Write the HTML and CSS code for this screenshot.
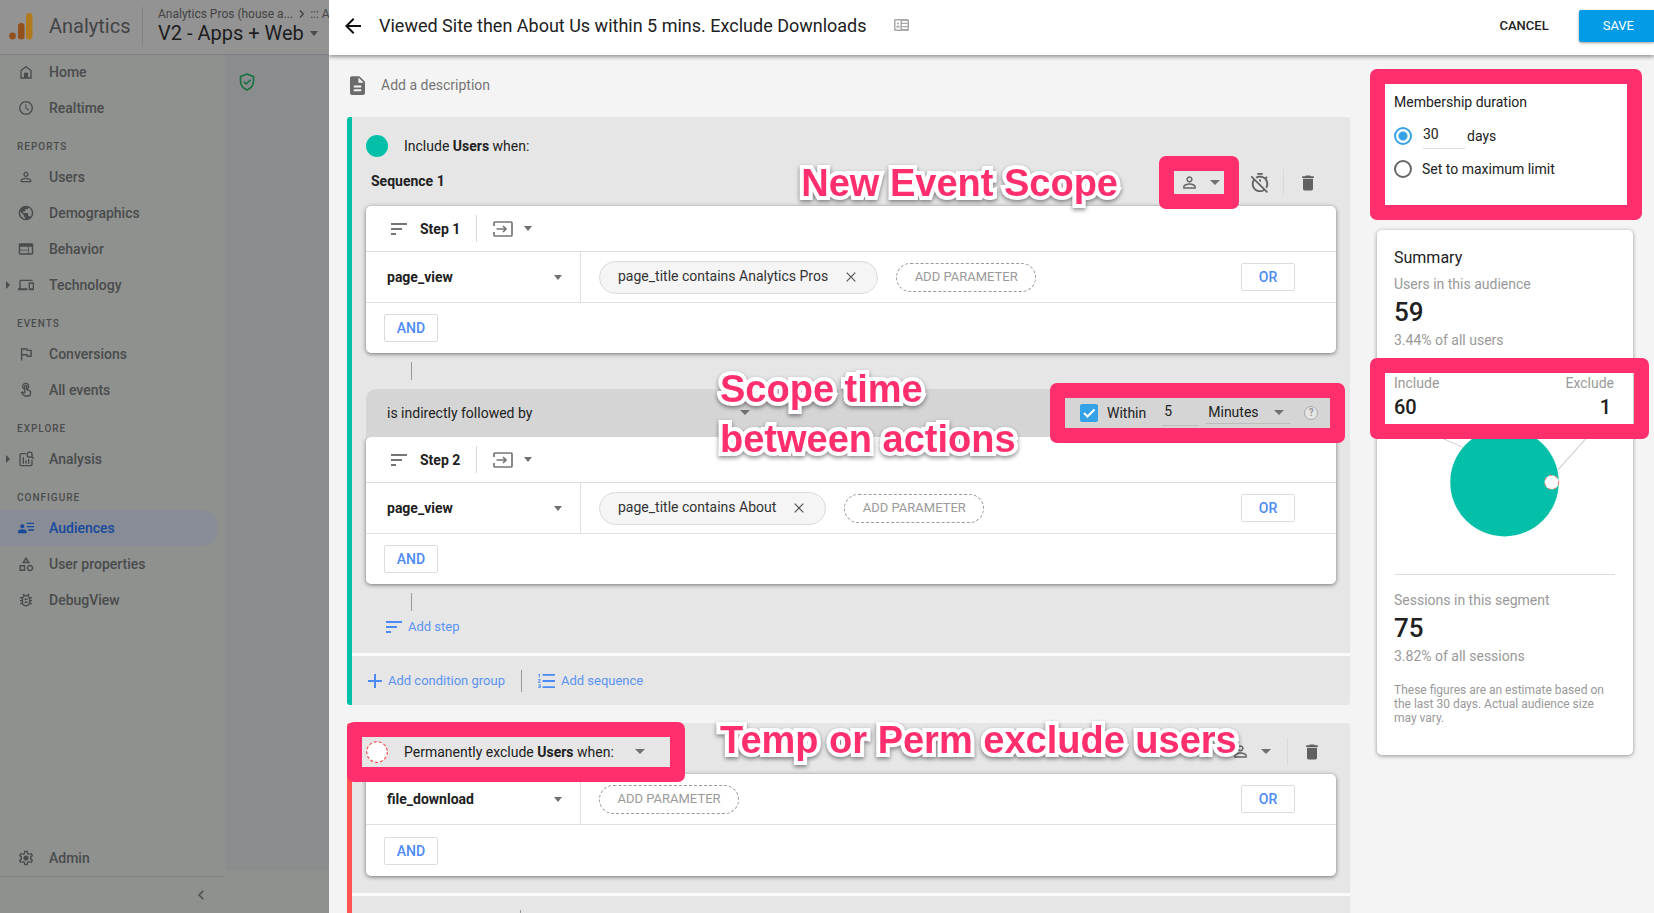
FILE: index.html
```html
<!DOCTYPE html>
<html lang="en">
<head>
<meta charset="utf-8">
<title>Analytics - Audience builder</title>
<meta name="viewport" content="width=device-width, initial-scale=1">
<link rel="stylesheet" href="styles.css">
</head>
<body>
<svg class="sprite" aria-hidden="true">
  <symbol id="i-person" viewBox="0 0 24 24"><path d="M12 5.9c1.16 0 2.1.94 2.1 2.1s-.94 2.1-2.1 2.1S9.900 9.160 9.900 8s.94-2.100 2.100-2.100m0 9c2.970 0 6.100 1.460 6.100 2.100v1.100H5.900V17c0-.64 3.130-2.100 6.100-2.100M12 4C9.790 4 8 5.790 8 8s1.790 4 4 4 4-1.790 4-4-1.790-4-4-4zm0 9c-2.670 0-8 1.340-8 4v3h16v-3c0-2.660-5.330-4-8-4z"/></symbol>
  <symbol id="i-trash" viewBox="0 0 24 24"><path d="M6 19c0 1.100.9 2 2 2h8c1.100 0 2-.9 2-2V7H6v12zM19 4h-3.500l-1-1h-5l-1 1H5v2h14V4z"/></symbol>
  <symbol id="i-steps" viewBox="0 0 16 12"><path d="M0 0h16v2H0zM0 5h11v2H0zM0 10h5v2H0z"/></symbol>
  <symbol id="i-enter" viewBox="0 0 20 16"><path d="M1 5V2q0-1 1-1h16q1 0 1 1v12q0 1-1 1H2q-1 0-1-1v-3M3.500 8H13M10 5l3 3-3 3" fill="none" stroke="currentColor" stroke-width="1.700"/></symbol>
  <symbol id="i-close" viewBox="0 0 10 10"><path d="M.7.7l8.600 8.600M9.300.7L.7 9.300" fill="none" stroke="currentColor" stroke-width="1.200"/></symbol>
</svg>

<div class="app">
  <header class="topbar">
    <svg class="logo" viewBox="0 0 24 28" aria-hidden="true"><rect x="17" y="1" width="6.500" height="26.500" rx="3.200" fill="#b07a1f"/><rect x="9" y="11" width="6.500" height="16.500" rx="3.200" fill="#92501c"/><circle cx="3.500" cy="24" r="3.400" fill="#92501c"/></svg>
    <span class="brand">Analytics</span>
    <div class="property">
      <div class="crumbs"><span>Analytics Pros (house a...</span><svg viewBox="0 0 5 8" aria-hidden="true"><path d="M1 .5L4.200 4 1 7.500" fill="none" stroke="currentColor" stroke-width="1.500"/></svg><span>::: Ana</span></div>
      <div class="prop-name">V2 - Apps + Web <i class="caret"></i></div>
    </div>
  </header>
  <nav class="sidebar">
    <a class="nav-item" href="#"><svg viewBox="0 0 24 24"><path d="M4.500 9.800L12 4l7.500 5.800V21h-15z" fill="none" stroke="currentColor" stroke-width="2"/><path d="M9 13h6v8H9z"/></svg>Home</a>
    <a class="nav-item" href="#"><svg viewBox="0 0 24 24"><path d="M12 1.500A10.500 10.500 0 1 0 12 22.500 10.500 10.500 0 1 0 12 1.500zm0 19a8.500 8.500 0 1 1 0-17 8.500 8.500 0 0 1 0 17zM12.500 6.500H11v6.200l4.900 3.400.9-1.300-4.300-2.900z"/></svg>Realtime</a>
    <h2 class="nav-head">REPORTS</h2>
    <a class="nav-item" href="#"><svg><use href="#i-person"/></svg>Users</a>
    <a class="nav-item" href="#"><svg viewBox="1 1 22 22"><path d="M12 2C6.480 2 2 6.480 2 12s4.480 10 10 10 10-4.480 10-10S17.520 2 12 2zm-1 17.930c-3.950-.49-7-3.850-7-7.930 0-.62.08-1.210.21-1.790L9 15v1c0 1.100.9 2 2 2v1.930zm6.900-2.540c-.26-.81-1-1.390-1.900-1.390h-1v-3c0-.55-.45-1-1-1H8v-2h2c.55 0 1-.45 1-1V7h2c1.100 0 2-.9 2-2v-.41c2.930 1.190 5 4.060 5 7.410 0 2.080-.8 3.970-2.100 5.390z"/></svg>Demographics</a>
    <a class="nav-item" href="#"><svg viewBox="1 1 22 22"><path d="M20 4H4c-1.100 0-1.990.9-1.990 2L2 18c0 1.100.9 2 2 2h16c1.100 0 2-.9 2-2V6c0-1.100-.9-2-2-2zm-5 14H4v-4h11v4zm0-5H4V9h11v4zm5 5h-4V9h4v9z"/></svg>Behavior</a>
    <a class="nav-item has-children" href="#"><svg viewBox="0 0 24 24"><path d="M4 6h18V4H4c-1.100 0-2 .9-2 2v11H0v3h14v-3H4V6zm19 2h-6c-.55 0-1 .45-1 1v10c0 .55.45 1 1 1h6c.55 0 1-.45 1-1V9c0-.55-.45-1-1-1zm-1 9h-4v-7h4v7z"/></svg>Technology</a>
    <h2 class="nav-head">EVENTS</h2>
    <a class="nav-item" href="#"><svg viewBox="1 1 22 22"><path d="M12.360 6l.4 2H18v6h-3.360l-.4-2H7V6h5.360M14 4H5v17h2v-7h5.600l.4 2h7V6h-5.600L14 4z"/></svg>Conversions</a>
    <a class="nav-item" href="#"><svg viewBox="0 0 24 24"><path d="M18.190 12.440l-3.240-1.620c1.290-1 2.120-2.560 2.120-4.320 0-3.030-2.470-5.500-5.500-5.500s-5.500 2.470-5.500 5.500c0 2.130 1.220 3.980 3 4.890v3.260c-2.150-.46-2.020-.44-2.260-.44-.53 0-1.030.21-1.410.59L4 16.220l5.090 5.090c.43.44 1.030.69 1.650.69h6.300c.98 0 1.810-.7 1.970-1.670l.8-4.710c.22-1.300-.43-2.580-1.620-3.180zm-.35 2.850l-.8 4.710h-6.300c-.09 0-.17-.04-.24-.1l-3.680-3.680 4.250.89V6.500c0-.28.22-.5.500-.5s.5.22.5.500v6h1.760l3.460 1.730c.4.2.62.63.55 1.060zM8.070 6.500c0-1.930 1.570-3.500 3.500-3.500s3.500 1.570 3.500 3.500c0 .95-.38 1.810-1 2.440V6.500c0-1.380-1.120-2.500-2.500-2.500s-2.500 1.120-2.500 2.500v2.440c-.62-.63-1-1.490-1-2.440z"/></svg>All events</a>
    <h2 class="nav-head">EXPLORE</h2>
    <a class="nav-item has-children" href="#"><svg viewBox="0 0 24 24"><path d="M12 4H5q-2 0-2 2v14q0 2 2 2h14q2 0 2-2v-7" fill="none" stroke="currentColor" stroke-width="2"/><circle cx="17.500" cy="5.500" r="3.800" fill="none" stroke="currentColor" stroke-width="2"/><path d="M20 8l3.500 3.500" stroke="currentColor" stroke-width="2"/><path d="M7 9h2v10H7zM11 14h2v5h-2zM15 12h2v7h-2z"/></svg>Analysis</a>
    <h2 class="nav-head">CONFIGURE</h2>
    <a class="nav-item active" href="#"><svg viewBox="0 0 24 24"><circle cx="6.500" cy="9.500" r="3"/><path d="M0 20v-2q0-4 6.500-4t6.500 4v2zM13 4h11v2H13zM13 9h11v2H13zM15 14h9v2h-9z"/></svg>Audiences</a>
    <a class="nav-item" href="#"><svg viewBox="1 1 22 22"><path d="M12 2l-5.500 9h11L12 2zm0 3.840L13.930 9h-3.870L12 5.840zM17.500 13c-2.490 0-4.500 2.010-4.500 4.500s2.010 4.500 4.500 4.500 4.500-2.010 4.500-4.500-2.010-4.500-4.500-4.500zm0 7c-1.380 0-2.500-1.120-2.500-2.500s1.120-2.500 2.500-2.500 2.500 1.120 2.500 2.500-1.120 2.500-2.500 2.500zM3 21.500h8v-8H3v8zm2-6h4v4H5v-4z"/></svg>User properties</a>
    <a class="nav-item" href="#"><svg viewBox="1 1 22 22"><path d="M20 8h-2.810c-.45-.78-1.070-1.450-1.820-1.960L17 4.410 15.590 3l-2.170 2.170C12.960 5.060 12.490 5 12 5s-.96.06-1.410.17L8.410 3 7 4.410l1.620 1.630C7.880 6.550 7.260 7.220 6.810 8H4v2h2.090c-.05.33-.09.66-.09 1v1H4v2h2v1c0 .34.04.67.09 1H4v2h2.810c1.040 1.790 2.970 3 5.190 3s4.150-1.210 5.190-3H20v-2h-2.090c.05-.33.09-.66.09-1v-1h2v-2h-2v-1c0-.34-.04-.67-.09-1H20V8zm-4 7c0 2.300-1.700 4-4 4s-4-1.700-4-4v-4c0-2.300 1.700-4 4-4s4 1.700 4 4zm-6-1h4v2h-4zm0-4h4v2h-4z" fill-rule="evenodd"/></svg>DebugView</a>
    <div class="nav-bottom">
      <a class="nav-item" href="#"><svg viewBox="1 1 22 22"><path fill-rule="evenodd" d="M19.430 12.980c.04-.32.07-.64.07-.98 0-.34-.03-.66-.07-.98l2.110-1.650c.19-.15.24-.42.12-.64l-2-3.460c-.09-.16-.26-.25-.44-.25-.06 0-.12.01-.17.03l-2.490 1c-.52-.4-1.080-.73-1.690-.98l-.38-2.650C14.460 2.180 14.250 2 14 2h-4c-.25 0-.46.18-.49.42l-.38 2.650c-.61.25-1.170.59-1.690.98l-2.490-1c-.06-.02-.12-.03-.18-.03-.17 0-.34.09-.43.25l-2 3.460c-.13.22-.07.49.12.64l2.110 1.650c-.04.32-.07.65-.07.98 0 .33.03.66.07.98l-2.110 1.650c-.19.15-.24.42-.12.64l2 3.460c.09.16.26.25.44.25.06 0 .12-.01.17-.03l2.490-1c.52.4 1.080.73 1.690.98l.38 2.650c.03.24.24.42.49.42h4c.25 0 .46-.18.49-.42l.38-2.650c.61-.25 1.170-.59 1.690-.98l2.490 1c.06.02.12.03.18.03.17 0 .34-.09.43-.25l2-3.460c.12-.22.07-.49-.12-.64l-2.110-1.650zM12 4h1l.6 2.800 2.300 1.200 2.700-1 .8 1.300-2 2v3.400l2 2-.8 1.300-2.700-1-2.300 1.200L13 20h-2l-.6-2.800L8.100 16l-2.700 1-.8-1.300 2-2v-3.400l-2-2L5.400 7l2.700 1 2.300-1.200L11 4z"/><circle cx="12" cy="12" r="3.500"/></svg>Admin</a>
      <button class="collapse" aria-label="Collapse menu"><svg viewBox="0 0 6 10"><path d="M5.300.7L1 5l4.300 4.300" fill="none" stroke="currentColor" stroke-width="1.500"/></svg></button>
    </div>
  </nav>
  <div class="backdrop">
    <svg class="shield" viewBox="0 0 16 18" aria-hidden="true"><path d="M8 1l6.500 2.500V8q0 6-6.500 9Q1.500 14 1.500 8V3.500zM4.800 8.700L7.200 11l4.300-4.300" fill="none" stroke="#14703f" stroke-width="1.600"/></svg>
  </div>
</div>

<main class="panel">
  <header class="panel-head">
    <button class="icon-btn back" aria-label="Back"><svg viewBox="4 4 16 16"><path d="M20 11H7.830l5.590-5.590L12 4l-8 8 8 8 1.410-1.410L7.830 13H20v-2z"/></svg></button>
    <h1>Viewed Site then About Us within 5 mins. Exclude Downloads</h1>
    <svg class="id-card" viewBox="0 0 15 12" aria-hidden="true"><path fill-rule="evenodd" d="M1.500 0h12q1.500 0 1.500 1.500v9q0 1.500-1.500 1.500h-12Q0 12 0 10.500v-9Q0 0 1.500 0zM1.500 1.500v9h5v-9zM8 2v1.800h5.500V2zM8 5.100v1.800h5.500V5.100zM8 8.200V10h5.500V8.200z"/><circle cx="4" cy="4.500" r="1.100"/><path d="M2 8.500q0-2 2-2t2 2z"/></svg>
    <button class="cancel">CANCEL</button>
    <button class="save">SAVE</button>
  </header>

  <div class="panel-body">
    <div class="builder">
      <label class="description"><svg viewBox="4 2 16 20" aria-hidden="true"><path d="M14 2H6c-1.100 0-1.990.9-1.990 2L4 20c0 1.100.89 2 1.990 2H18c1.100 0 2-.9 2-2V8l-6-6zm2 16H8v-2h8v2zm0-4H8v-2h8v2zm-3-5V3.500L18.500 9H13z"/></svg><input type="text" placeholder="Add a description" aria-label="Description"></label>

      <section class="group include">
        <div class="group-head"><span class="dot"></span><span>Include <b>Users</b> when:</span></div>
        <div class="tools">
          <b class="seq">Sequence 1</b>
          <span class="note note-scope">New Event Scope</span>
          <button class="scope marked" aria-label="Event scope"><svg><use href="#i-person"/></svg><i class="caret"></i></button>
          <button class="icon-btn timer" aria-label="Time constraint"><svg viewBox="1 1 22 22"><path d="M19.040 4.550l-1.420 1.420C16.070 4.740 14.120 4 12 4c-1.830 0-3.530.55-4.950 1.480l1.460 1.460C9.530 6.350 10.730 6 12 6c3.870 0 7 3.130 7 7 0 1.270-.35 2.470-.94 3.490l1.450 1.450C20.450 16.530 21 14.830 21 13c0-2.120-.74-4.070-1.970-5.610l1.420-1.420-1.410-1.420zM15 1H9v2h6V1zm-4 8.440l2 2V8h-2v1.440zM3.020 4L1.750 5.270 4.500 8.030C3.550 9.450 3 11.160 3 13c0 4.970 4.020 9 9 9 1.840 0 3.550-.55 4.980-1.500l2.500 2.500 1.270-1.270-7.710-7.710L3.020 4zM12 20c-3.870 0-7-3.130-7-7 0-1.280.35-2.480.95-3.520l9.560 9.560c-1.030.61-2.230.96-3.510.96z"/></svg></button>
          <i class="rule"></i>
          <button class="icon-btn trash" aria-label="Delete sequence"><svg><use href="#i-trash"/></svg></button>
        </div>

        <div class="card">
          <div class="step-head"><svg class="steps"><use href="#i-steps"/></svg><b>Step 1</b><i class="rule"></i><button class="step-scope" aria-label="Step scope"><svg><use href="#i-enter"/></svg><i class="caret"></i></button></div>
          <div class="cond">
            <label class="pick event"><select aria-label="Event"><option>page_view</option></select><i class="caret"></i></label>
            <div class="params"><span class="chip"><span>page_title contains Analytics Pros</span><button aria-label="Remove"><svg><use href="#i-close"/></svg></button></span><button class="add-param">ADD PARAMETER</button><button class="op">OR</button></div>
          </div>
          <div class="and-row"><button class="op">AND</button></div>
        </div>

        <i class="link"></i>

        <div class="follow">
          <label class="pick relation"><select aria-label="Relation"><option>is indirectly followed by</option></select><i class="caret"></i></label>
          <span class="note note-time">Scope time<br>between actions</span>
          <div class="within marked">
            <label class="check"><input type="checkbox" checked><svg viewBox="0 0 18 18" aria-hidden="true"><path d="M4 9l3.500 3.500L14.500 5.500" fill="none" stroke="#fff" stroke-width="2"/></svg>Within</label>
            <input class="num" type="text" value="5" aria-label="Amount">
            <label class="pick unit"><select aria-label="Unit"><option>Minutes</option></select><i class="caret"></i></label>
            <span class="help">?</span>
          </div>
        </div>

        <div class="card">
          <div class="step-head"><svg class="steps"><use href="#i-steps"/></svg><b>Step 2</b><i class="rule"></i><button class="step-scope" aria-label="Step scope"><svg><use href="#i-enter"/></svg><i class="caret"></i></button></div>
          <div class="cond">
            <label class="pick event"><select aria-label="Event"><option>page_view</option></select><i class="caret"></i></label>
            <div class="params"><span class="chip"><span>page_title contains About</span><button aria-label="Remove"><svg><use href="#i-close"/></svg></button></span><button class="add-param">ADD PARAMETER</button><button class="op">OR</button></div>
          </div>
          <div class="and-row"><button class="op">AND</button></div>
        </div>

        <i class="link"></i>
        <button class="text-btn add-step"><svg class="steps"><use href="#i-steps"/></svg>Add step</button>

        <footer class="group-foot">
          <button class="text-btn"><svg class="plus" viewBox="0 0 14 14"><path d="M6 0h2v6h6v2H8v6H6V8H0V6h6z"/></svg>Add condition group</button>
          <i class="rule dark"></i>
          <button class="text-btn"><svg class="list" viewBox="2 3 19 18"><path d="M2 17h2v.5H3v1h1v.5H2v1h3v-4H2v1zm1-9h1V4H2v1h1v3zm-1 3h1.800L2 13.100v.9h3v-1H3.200L5 10.900V10H2v1zm5-7v2h14V4H7zm0 16h14v-2H7v2zm0-7h14v-2H7v2z"/></svg>Add sequence</button>
        </footer>
      </section>

      <section class="group exclude">
        <div class="tools">
          <button class="excl-mode marked"><svg class="dashed-dot" viewBox="0 0 22 22"><circle cx="11" cy="11" r="10.300" fill="#fff" stroke="#ff5252" stroke-width="1.200" stroke-dasharray="3 2"/></svg><span>Permanently exclude <b>Users</b> when:</span><i class="caret"></i></button>
          <span class="note note-excl">Temp or Perm exclude users</span>
          <button class="scope" aria-label="Group scope"><svg><use href="#i-person"/></svg><i class="caret"></i></button>
          <i class="rule"></i>
          <button class="icon-btn trash" aria-label="Delete group"><svg><use href="#i-trash"/></svg></button>
        </div>
        <div class="card">
          <div class="cond">
            <label class="pick event"><select aria-label="Event"><option>file_download</option></select><i class="caret"></i></label>
            <div class="params"><button class="add-param">ADD PARAMETER</button><button class="op">OR</button></div>
          </div>
          <div class="and-row"><button class="op">AND</button></div>
        </div>
        <footer class="group-foot"><i class="rule dark"></i></footer>
      </section>
    </div>

    <aside class="side">
      <section class="duration marked">
        <h3>Membership duration</h3>
        <div class="radio-row"><input type="radio" name="dur" id="d-days" checked><input class="num" type="text" value="30" aria-label="Number of days"><label for="d-days">days</label></div>
        <div class="radio-row"><input type="radio" name="dur" id="d-max"><label for="d-max" class="max">Set to maximum limit</label></div>
      </section>

      <section class="summary">
        <h3>Summary</h3>
        <p class="muted">Users in this audience</p>
        <p class="big">59</p>
        <p class="muted">3.44% of all users</p>
        <div class="split marked">
          <div><p class="muted">Include</p><p class="mid">60</p></div>
          <div class="right"><p class="muted">Exclude</p><p class="mid">1</p></div>
        </div>
        <svg class="venn" viewBox="0 0 220 116" role="img" aria-label="Included and excluded users"><path d="M16 0l52 23M204 0l-41 46" stroke="#ccc" fill="none"/><circle cx="16" cy="1" r="2" fill="#bbb"/><circle cx="202" cy="1" r="2" fill="#bbb"/><circle cx="110" cy="58" r="54" fill="#04c0a8"/><circle cx="157" cy="58" r="7" fill="#fff" stroke="#ff7b72" stroke-dasharray="3 3"/></svg>
        <hr>
        <p class="muted">Sessions in this segment</p>
        <p class="big">75</p>
        <p class="muted">3.82% of all sessions</p>
        <p class="fine">These figures are an estimate based on the last 30 days. Actual audience size may vary.</p>
      </section>
    </aside>
  </div>
</main>
</body>
</html>
```
FILE: styles.css
```css
* { box-sizing: border-box; }
body {
  margin: 0;
  height: 100vh;
  overflow: hidden;
  display: flex;
  font: 14px/20px Roboto, "Liberation Sans", sans-serif;
  color: #212121;
  background: #f4f4f4;
}
h1, h2, h3, p { margin: 0; font-size: inherit; font-weight: 400; }
svg { fill: currentColor; flex: none; display: block; }
button, input, select { font: inherit; color: inherit; background: none; border: 0; padding: 0; margin: 0; }
b { font-weight: 700; }
.sprite { position: absolute; width: 0; height: 0; }
.caret { flex: none; border: 4px solid transparent; border-top: 5px solid currentColor; border-bottom: 0; color: #707070; }

/* Dimmed application behind the panel */
.app {
  flex: none;
  width: 329px;
  height: 100vh;
  overflow: hidden;
  display: grid;
  grid-template: 54px 1fr / 225px 1fr;
  background: #8f918f;
  color: #4a4b4c;
}
.topbar {
  grid-column: 1 / 3;
  display: flex;
  align-items: center;
  padding: 0 0 2px 9px;
  background: #939393;
  box-shadow: 0 1px 1px #7d8186;
  z-index: 1;
}
.logo { width: 24px; height: 28px; }
.brand { flex: none; margin-left: 16px; font-size: 20px; line-height: 24px; width: 93px; color: #434445; }
.property { flex: none; padding-left: 15px; border-left: 1px solid #808182; }
.crumbs { display: flex; align-items: center; gap: 6px; font-size: 12px; line-height: 14px; color: #444; white-space: nowrap; }
.crumbs svg { width: 5px; height: 8px; }
.prop-name { display: flex; align-items: center; gap: 6px; font-size: 20px; line-height: 24px; color: #1d1d1e; white-space: nowrap; }
.prop-name .caret { color: #4a4b4c; }
.sidebar { display: flex; flex-direction: column; }
.nav-item {
  display: flex;
  align-items: center;
  gap: 15px;
  height: 36px;
  flex: none;
  margin-right: 7px;
  padding-left: 18px;
  border-radius: 0 18px 18px 0;
  color: inherit;
  text-decoration: none;
  font-weight: 500;
}
.nav-item svg { width: 16px; height: 16px; }
.nav-item.active { background: #878c97; color: #17499b; }
.has-children { padding-left: 6px; gap: 0; }
.has-children svg { margin-right: 15px; }
.has-children::before { content: ""; border: 4px solid transparent; border-left-color: currentColor; border-right: 0; margin-right: 8px; }
.nav-head { height: 33px; padding: 12px 0 0 17px; font-size: 10px; line-height: 18px; font-weight: 500; letter-spacing: 1px; }
.nav-bottom { margin-top: auto; }
.collapse { display: flex; align-items: center; justify-content: flex-end; width: 100%; height: 37px; padding-right: 21px; border-top: 1px solid #7f8182; }
.collapse svg { width: 6px; height: 10px; }
.backdrop { background: #8b8c8e; margin-bottom: 43px; padding: 19px 14px; }
.shield { width: 16px; height: 18px; }

/* Panel */
.panel { flex: 1; min-width: 0; height: 100vh; overflow: hidden; display: flex; flex-direction: column; }
.panel-head {
  flex: none;
  display: flex;
  align-items: center;
  height: 55px;
  padding: 0 0 3px 16px;
  background: #fff;
  box-shadow: 0 2px 4px rgba(0, 0, 0, .4);
  z-index: 2;
}
.back svg { width: 16px; height: 16px; color: #111; }
h1 { margin-left: 18px; font-size: 18px; line-height: 24px; white-space: nowrap; }
.id-card { width: 15px; height: 12px; margin: 0 0 2px 27px; color: #a8a8a8; }
.cancel { margin-left: auto; font-size: 13px; font-weight: 500; }
.save { margin-left: 30px; height: 32px; padding: 0 20px 0 24px; font-size: 13px; color: #fff; background: #039be5; border-radius: 2px 0 0 2px; box-shadow: 0 1px 3px rgba(0, 0, 0, .4); }
.panel-body { flex: 1; min-height: 0; display: grid; grid-template-columns: minmax(0, 1fr) 256px; column-gap: 27px; padding: 0 21px 0 18px; }
.description { display: flex; align-items: center; gap: 16px; height: 62px; padding: 0 0 2px 3px; color: #6b6b6b; }
.description svg { width: 15px; height: 19px; }
.description input { flex: 1; }
.description input::placeholder { color: #757575; opacity: 1; }

/* Condition groups */
.group { position: relative; background: #e6e6e6; border-left: 5px solid #04c0a8; border-radius: 3px; padding: 0 14px; margin-bottom: 18px; }
.exclude { border-color: #ff5252; padding-top: 15px; }
.group-head { display: flex; align-items: center; gap: 16px; padding-top: 18px; height: 52px; padding-bottom: 12px; }
.dot { width: 22px; height: 22px; border-radius: 50%; background: #04c0a8; }
.tools { position: relative; display: flex; align-items: center; height: 27px; margin-bottom: 9px; }
.include .tools { margin-bottom: 10px; }
.seq { margin: 0 auto 0 5px; padding-bottom: 3px; }
.rule { flex: none; width: 1px; height: 27px; background: #d9d9d9; }
.rule.dark { height: 22px; background: #999; }
.icon-btn { flex: none; color: #616161; }
.scope { display: flex; align-items: center; gap: 11px; color: #666; height: 23px; }
.scope svg { width: 19px; height: 19px; }
.include .scope { padding: 0 4px 0 6px; margin-right: 26px; }
.exclude .scope { margin: 0 16px 0 auto; }
.timer svg { width: 20px; height: 20px; }
.timer { margin-right: 13px; }
.trash svg { width: 20px; height: 20px; }
.include .trash { margin: 0 18px 0 14px; }
.exclude .trash { margin: 0 14px; }
.card { background: #fff; border-radius: 5px; box-shadow: 0 1px 4px rgba(0, 0, 0, .5); }
.step-head { display: flex; align-items: center; height: 46px; padding-left: 25px; border-bottom: 1px solid #dcdcdc; }
.steps { width: 16px; height: 12px; color: #757575; }
.step-head .steps { margin: 0 13px 0 0; }
.step-head .rule { margin: 0 16px; background: #d6d6d6; }
.step-scope { display: flex; align-items: center; gap: 11px; color: #757575; }
.step-scope svg { width: 20px; height: 16px; }
.cond { display: flex; height: 51px; border-bottom: 1px solid #e0e0e0; }
.pick { position: relative; display: flex; align-items: center; }
.pick select { appearance: none; flex: 1; min-width: 0; outline: 0; }
.pick .caret { position: absolute; right: 18px; pointer-events: none; }
.event { flex: none; width: 215px; padding-left: 21px; border-right: 1px solid #e0e0e0; font-weight: 700; }
.params { flex: 1; display: flex; align-items: center; gap: 18px; padding: 0 41px 0 18px; }
.params .op { margin-left: auto; }
.chip { display: flex; align-items: center; gap: 18px; height: 33px; padding: 0 21px 0 18px; border: 1px solid #dadada; border-radius: 17px; background: #f5f5f5; color: #333; }
.chip span { padding-bottom: 3px; }
.chip button { color: #555; }
.chip svg { width: 10px; height: 10px; }
.add-param { width: 140px; height: 29px; border: 1px dashed #9a9a9a; border-radius: 15px; font-size: 13px; color: #9a9a9a; }
.op { width: 54px; height: 28px; border: 1px solid #dcdcdc; border-radius: 2px; color: #4c8bf5; font-size: 14px; font-weight: 500; }
.and-row { display: flex; align-items: center; height: 50px; padding-left: 18px; }
.exclude .and-row { height: 51px; }
.link { display: block; width: 1px; height: 18px; margin: 9px 0 9px 45px; background: #999; }
.follow { position: relative; display: flex; align-items: center; justify-content: space-between; height: 48px; padding: 0 6px 1px 21px; border-radius: 10px 10px 0 0; background: #d5d5d5; }
.relation { width: 374px; }
.relation .caret { right: 11px; }
.within { display: flex; align-items: center; height: 30px; width: 265px; padding-left: 15px; }
.check { position: relative; display: flex; align-items: center; gap: 9px; }
.check input { appearance: none; width: 18px; height: 18px; border-radius: 2px; background: #35a2e8; }
.check svg { position: absolute; left: 0; width: 18px; height: 18px; }
.num { border-bottom: 1px solid #bdbdbd; }
.within .num { width: 37px; height: 27px; margin: 0 7px 0 16px; padding: 0 2px 3px; }
.unit { width: 84px; height: 23px; border-bottom: 1px solid #bdbdbd; padding-left: 2px; }
.unit .caret { right: 6px; }
.within .caret, .relation .caret, .excl-mode .caret, .scope .caret { border-width: 5px 5px 0; }
.help { margin-left: 14px; width: 14px; height: 14px; border: 1px solid #aaa; border-radius: 50%; background: #e6e6e6; font-size: 10px; line-height: 12px; font-weight: 700; text-align: center; color: #999; }
.text-btn { display: flex; align-items: center; gap: 6px; font-size: 13px; color: #5b93f5; }
.text-btn svg { color: #4c8bf5; }
.add-step { margin: -3px 0 0 20px; height: 20px; }
.group-foot { display: flex; align-items: center; gap: 16px; height: 52px; margin: 16px -14px 0; padding-left: 16px; border-top: 3px solid #fafafa; }
.exclude .group-foot { margin-top: 17px; padding-left: 168px; }
.plus { width: 14px; height: 14px; }
.list { width: 17px; height: 16px; }
.excl-mode { display: flex; align-items: center; width: 308px; height: 30px; margin-left: -4px; padding-left: 4px; white-space: nowrap; }
.dashed-dot { width: 22px; height: 22px; margin-right: 16px; }
.excl-mode .caret { margin-left: 21px; }

/* Side column */
.side { padding-top: 29px; }
.duration { margin: 0 6px 25px 8px; height: 121px; padding: 8px 0 0 9px; background: #fff; }
.duration h3 { margin-bottom: 7px; }
.radio-row { display: flex; align-items: center; height: 33px; }
.radio-row input[type="radio"] { appearance: none; width: 18px; height: 18px; border: 2px solid #666; border-radius: 50%; }
.radio-row input[type="radio"]:checked { border-color: #35a2e8; background: radial-gradient(circle, #35a2e8 0 4px, transparent 5px); }
.radio-row .num { width: 42px; height: 26px; margin: 0 2px 0 11px; padding: 0 0 3px; border-color: #dcdcdc; }
.radio-row .max { margin-left: 10px; }
.summary { padding: 16px 18px 30px 17px; background: #fff; border-radius: 5px; box-shadow: 0 1px 4px rgba(0, 0, 0, .4); }
.summary h3 { font-size: 16px; line-height: 24px; margin-bottom: 4px; }
.muted { color: #999; }
.big { font-size: 26px; line-height: 36px; font-weight: 500; }
.split { display: flex; justify-content: space-between; height: 51px; margin: 23px -19px 0 -9px; padding: 0 20px 0 9px; }
.right { text-align: right; }
.mid { font-size: 20px; line-height: 28px; font-weight: 500; }
.right .mid { padding-right: 3px; }
.venn { width: 100%; height: auto; }
.summary hr { margin: 33px 0 15px; border: 0; border-top: 1px solid #dcdcdc; }
.fine { margin-top: 17px; font-size: 12px; line-height: 14px; color: #999; }

/* Callouts drawn over the interface */
.marked { position: relative; }
.marked::after { content: ""; position: absolute; inset: -15px; border: 15px solid #ff2f6d; border-radius: 7px; pointer-events: none; z-index: 3; }
.note {
  position: absolute;
  z-index: 4;
  font: 700 38px/50px "Liberation Sans", Arial, sans-serif;
  color: #ff2f6d;
  white-space: nowrap;
  -webkit-text-stroke: 8px #fff;
  paint-order: stroke fill;
  stroke-linejoin: round;
  filter: drop-shadow(0 2px 2px rgba(0, 0, 0, .45));
  pointer-events: none;
}
.note-scope { right: 218px; top: -11px; }
.note-time { left: 354px; top: -25px; }
.note-excl { left: 354px; top: -23px; }
```
